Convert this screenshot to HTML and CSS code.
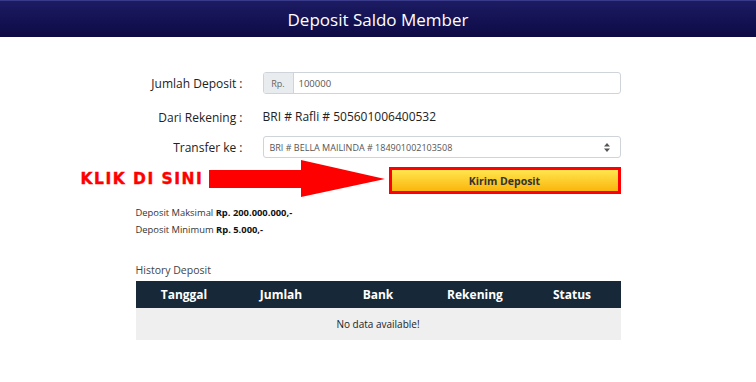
FILE: index.html
```html
<!DOCTYPE html>
<html>
<head>
  <meta charset="UTF-8">
  <title>Deposit Saldo Member</title>
  <link rel="stylesheet" href="styles.css">
</head>
<body>
  <div id="header">Deposit Saldo Member</div>

  <div class="content">
    <div class="form-row first">
      <label class="form-label">Jumlah Deposit :</label>
      <div class="input-group">
        <span class="addon">Rp.</span>
        <span class="input-value">100000</span>
      </div>
    </div>

    <div class="form-row">
      <label class="form-label">Dari Rekening :</label>
      <div class="plain-value">BRI # Rafli # 505601006400532</div>
    </div>

    <div class="form-row">
      <label class="form-label">Transfer ke :</label>
      <div class="select-box">
        <span>BRI # BELLA MAILINDA # 184901002103508</span>
        <svg width="6" height="9" viewBox="0 0 6 9">
          <path d="M3 0 L6 3.5 H0 Z M3 9 L6 5.5 H0 Z" fill="#555"/>
        </svg>
      </div>
    </div>

    <div class="submit-row">
      <div class="hint">
        <span class="hint-text">KLIK DI SINI</span>
        <svg class="hint-arrow" width="176" height="38" viewBox="0 0 176 38">
          <polygon points="0,10 92,10 92,0 176,19 92,37 92,28 0,28" fill="#ff0000"/>
        </svg>
      </div>
      <button id="sendBtn">Kirim Deposit</button>
    </div>

    <div class="limits">
      <div>Deposit Maksimal <b>Rp. 200.000.000,-</b></div>
      <div>Deposit Minimum <b>Rp. 5.000,-</b></div>
    </div>

    <div class="history-title">History Deposit</div>
    <table class="history">
      <thead>
        <tr>
          <th>Tanggal</th>
          <th>Jumlah</th>
          <th>Bank</th>
          <th>Rekening</th>
          <th>Status</th>
        </tr>
      </thead>
      <tbody>
        <tr>
          <td colspan="5">No data available!</td>
        </tr>
      </tbody>
    </table>
  </div>
</body>
</html>
```

FILE: styles.css
```css
body {
  margin: 0;
  font-family: "Open Sans", sans-serif;
  background: #fff;
  color: #222;
}

#header {
  height: 37px;
  line-height: 37px;
  text-align: center;
  color: #fff;
  font-size: 17px;
  background: linear-gradient(#1d1b63, #0d0a45);
  border-top: 1px solid #3a3a8a;
  box-sizing: border-box;
}

.content {
  width: 485px;
  margin: 0 auto;
}

.form-row {
  display: grid;
  grid-template-columns: 107px 1fr;
  column-gap: 20px;
  align-items: center;
  margin-bottom: 8px;
}

.form-row.first {
  margin-top: 35px;
  margin-bottom: 12px;
}

.form-label {
  text-align: right;
  font-size: 12px;
  color: #222;
}

.input-group {
  display: flex;
  height: 22px;
  border: 1px solid #ced4da;
  border-radius: 3px;
  box-sizing: border-box;
  overflow: hidden;
}

.addon {
  width: 29px;
  background: #e9ecef;
  border-right: 1px solid #ced4da;
  color: #666;
  font-size: 9px;
  display: flex;
  align-items: center;
  justify-content: center;
}

.input-value {
  padding-left: 5px;
  font-size: 9.5px;
  color: #555;
  display: flex;
  align-items: center;
}

.plain-value {
  font-size: 12px;
  color: #222;
  height: 22px;
  line-height: 22px;
}

.select-box {
  height: 22px;
  border: 1px solid #ced4da;
  border-radius: 3px;
  box-sizing: border-box;
  display: flex;
  align-items: center;
  justify-content: space-between;
  padding: 0 10px 0 6px;
  font-size: 9px;
  color: #555;
}

.submit-row {
  position: relative;
  display: flex;
  justify-content: flex-end;
  margin-top: 9px;
}

#sendBtn {
  width: 232px;
  height: 27px;
  border: 3px solid #ff0000;
  background: linear-gradient(#ffe64e, #fbb50c);
  font-family: "Open Sans", sans-serif;
  font-weight: bold;
  font-size: 10.5px;
  color: #333;
  cursor: pointer;
}

.hint {
  position: absolute;
  left: -55px;
  top: -7px;
  display: flex;
  align-items: center;
}

.hint-text {
  width: 128px;
  color: #ff0000;
  font-family: "DejaVu Sans", sans-serif;
  font-weight: bold;
  font-size: 15.5px;
  letter-spacing: 1.5px;
  -webkit-text-stroke: 0.4px #ff0000;
}

.limits {
  margin-top: 10px;
  font-size: 9.4px;
  line-height: 17px;
  color: #333;
}

.limits b {
  color: #111;
}

.history-title {
  margin-top: 25px;
  font-size: 10.5px;
  color: #444;
}

.history {
  width: 100%;
  margin-top: 4px;
  border-collapse: collapse;
  table-layout: fixed;
}

.history th {
  background: #172938;
  color: #fff;
  font-size: 12px;
  height: 27px;
  padding: 0;
}

.history td {
  background: #efefef;
  text-align: center;
  font-size: 10px;
  height: 30px;
  color: #222;
}
```
